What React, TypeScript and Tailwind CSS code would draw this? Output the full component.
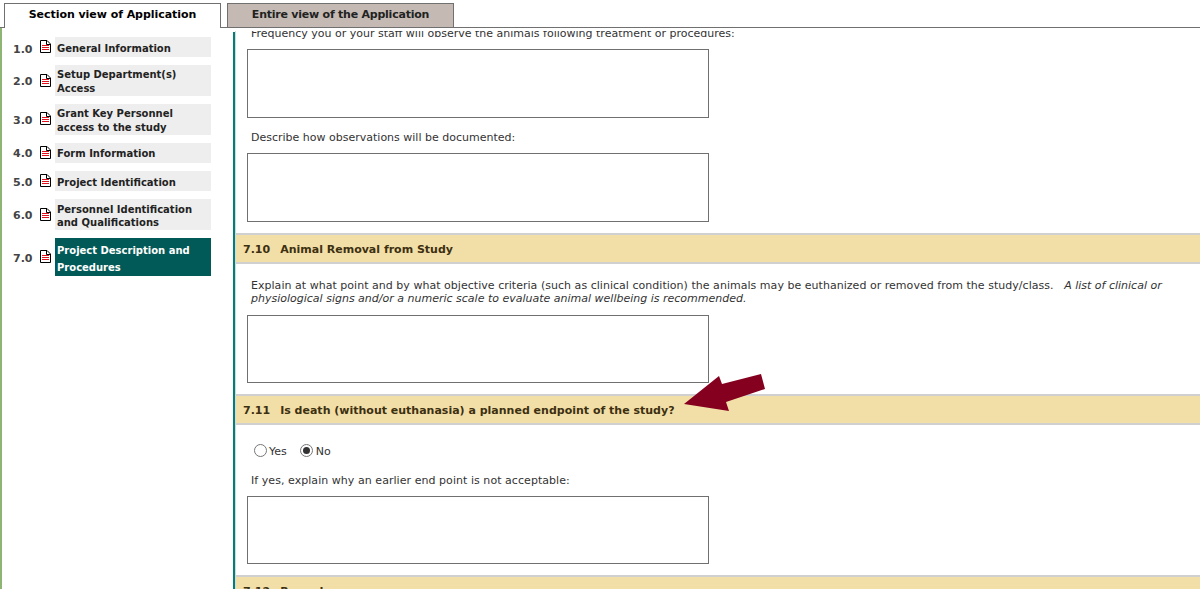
import React from 'react';

const sections = [
  { num: '1.0', lines: ['General Information'], row: 'h-5', text: 'pt-[4px] leading-[14px]', icon: 'mt-[3px]', numTop: 'pt-[6px]' },
  { num: '2.0', lines: ['Setup Department(s)', 'Access'], row: 'h-[31px]', text: 'pt-[2px] leading-[14px]', icon: 'mt-[9px]', numTop: 'pt-[10px]' },
  { num: '3.0', lines: ['Grant Key Personnel', 'access to the study'], row: 'h-[31px]', text: 'pt-[2px] leading-[14px]', icon: 'mt-[8px]', numTop: 'pt-[10px]' },
  { num: '4.0', lines: ['Form Information'], row: 'h-5', text: 'pt-[2px] leading-[14px]', icon: 'mt-[3px]', numTop: 'pt-[4px]' },
  { num: '5.0', lines: ['Project Identification'], row: 'h-5', text: 'pt-[4px] leading-[14px]', icon: 'mt-[3px]', numTop: 'pt-[5px]' },
  { num: '6.0', lines: ['Personnel Identification', 'and Qualifications'], row: 'h-[31px]', text: 'pt-[3px] leading-[13px]', icon: 'mt-[9px]', numTop: 'pt-[10px]' },
];

const DocIcon = ({ className }: { className: string }) => (
  <svg width="11" height="13" viewBox="0 0 11 13" className={`shrink-0 ${className}`}>
    <path d="M0.5 0.5H7L10.5 4V12.5H0.5Z" fill="#fff" stroke="#000" />
    <path d="M6.5 0.5V4.5H10.5" fill="none" stroke="#000" />
    <path d="M2 5.5H9M2 7.5H9M2 9.5H9" stroke="#e0101c" />
  </svg>
);

const TextBox = ({ h = 'h-[69px]' }: { h?: string }) => (
  <div className={`ml-[11px] w-[462px] ${h} border border-[#707070] bg-white`} />
);

const SectionHeader = ({ num, title }: { num: string; title: string }) => (
  <div className="flex h-[31px] items-center border-t-2 border-b-2 border-t-[#d0d0d0] border-b-[#d0d0d0] bg-[#f2dfa8] pt-[4px] pl-[7px] text-[11px] font-bold text-[#3d3010]">
    <span className="mr-[10px]">{num}</span>
    <span>{title}</span>
  </div>
);

export default function App() {
  return (
    <div className="relative h-[589px] w-[1200px] overflow-hidden bg-white text-[11px] text-[#333] font-['DejaVu_Sans',Verdana,sans-serif]">
      <div className="relative flex h-[28px] items-end border-b border-[#707070] pl-[4px]">
        <div className="relative top-px flex h-[25px] w-[217px] items-center justify-center border border-b-0 border-[#707070] bg-white pb-[2px] text-[11px] font-bold tracking-[-0.05px] text-black">
          Section view of Application
        </div>
        <div className="ml-[6px] flex h-[24px] w-[227px] items-center justify-center border border-b-0 border-[#707070] bg-[#c4bab3] pb-[1px] text-[11px] font-bold tracking-[-0.23px] text-[#222]">
          Entire view of the Application
        </div>
      </div>

      <div className="flex h-[561px]">
        <aside className="w-[233px] shrink-0 border-l-2 border-[#8fb574] pt-[9px] pl-[11px]">
          <div className="flex flex-col gap-2">
            {sections.map((s) => (
              <div key={s.num} className="flex items-start">
                <span className={`w-[27px] text-[11px] leading-[13px] font-bold text-[#444] ${s.numTop}`}>{s.num}</span>
                <DocIcon className={s.icon} />
                <div className={`ml-[4px] flex w-[156px] ${s.row} flex-col justify-center bg-[#eeeeee] px-[2px] ${s.text} text-[10px] font-bold text-[#222]`}>
                  {s.lines.map((l) => <div key={l}>{l}</div>)}
                </div>
              </div>
            ))}
            <div className="flex items-start">
              <span className="w-[27px] pt-[14px] text-[11px] leading-[13px] font-bold text-[#444]">7.0</span>
              <DocIcon className="mt-[12px]" />
              <div className="ml-[4px] flex h-[38px] w-[156px] flex-col justify-center bg-[#025a58] px-[2px] pt-[3px] text-[10px] leading-[17px] font-bold text-white">
                <div>Project Description and</div>
                <div>Procedures</div>
              </div>
            </div>
          </div>
        </aside>

        <div className="mt-[4px] w-[2px] shrink-0 bg-[#007f78]" />

        <main className="mt-[3px] min-w-0 flex-1 overflow-hidden">
          <div className="-mt-[3px] border-l border-[#d8d8d8]">
            <div className="h-[17px] overflow-hidden pl-[15px]">
              <div className="-mt-[1px] leading-[13px]">Frequency you or your staff will observe the animals following treatment or procedures:</div>
            </div>
            <div className="h-[4px]" />
            <TextBox />
            <div className="pt-[13px] pb-[9px] pl-[15px] leading-[13px]">Describe how observations will be documented:</div>
            <TextBox />
            <div className="h-[11px]" />
            <SectionHeader num="7.10" title="Animal Removal from Study" />
            <div className="pt-[15px] pr-[30px] pb-[10px] pl-[15px] leading-[13px]">
              <span className="tracking-[0.03px]">Explain at what point and by what objective criteria (such as clinical condition) the animals may be euthanized or removed from the study/class. &nbsp; </span>
              <i>A list of clinical or physiological signs and/or a numeric scale to evaluate animal wellbeing is recommended.</i>
            </div>
            <TextBox h="h-[68px]" />
            <div className="h-[11px]" />
            <SectionHeader num="7.11" title="Is death (without euthanasia) a planned endpoint of the study?" />
            <div className="flex items-center pt-[18px] pl-[18px] leading-[13px]">
              <span className="h-[13px] w-[13px] rounded-full border border-[#767676] bg-white" />
              <span className="mt-[2px] mr-[13px] ml-[2px]">Yes</span>
              <span className="flex h-[13px] w-[13px] items-center justify-center rounded-full border border-[#767676] bg-white">
                <span className="h-[7px] w-[7px] rounded-full bg-[#333]" />
              </span>
              <span className="mt-[2px] ml-[3px]">No</span>
            </div>
            <div className="pt-[16px] pb-[9px] pl-[15px] leading-[13px] tracking-[0.05px]">If yes, explain why an earlier end point is not acceptable:</div>
            <TextBox h="h-[68px]" />
            <div className="h-[11px]" />
            <SectionHeader num="7.12" title="Records" />
          </div>
        </main>
      </div>

      <svg className="absolute top-[370px] left-[680px]" width="90" height="45" viewBox="0 0 90 45">
        <path d="M4 34 L39 6 L42 14 L81 4 L85 19 L46 32 L49 41 Z" fill="#84001e" />
      </svg>
    </div>
  );
}
